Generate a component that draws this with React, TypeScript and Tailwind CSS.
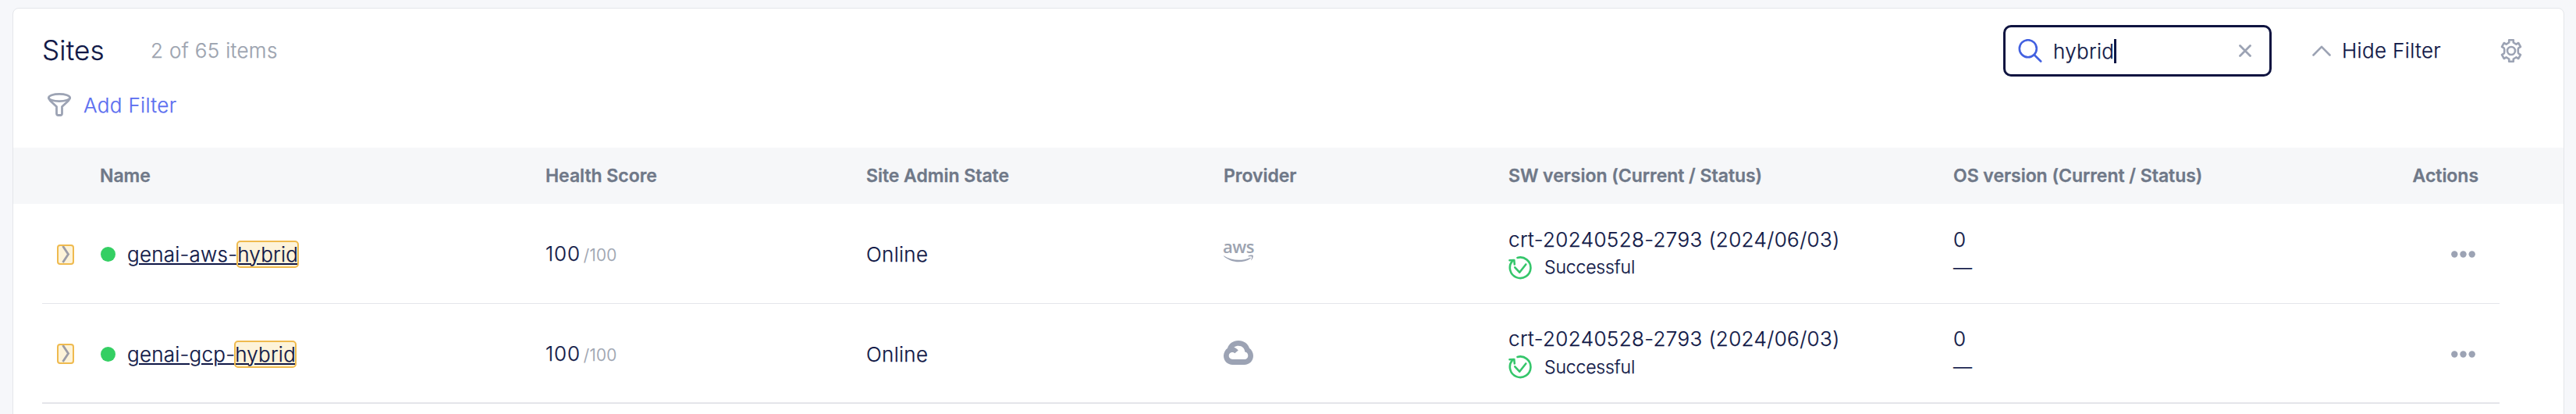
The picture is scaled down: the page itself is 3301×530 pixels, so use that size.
import React from "react";

const ROWS = [
  { prefix: "genai-aws-", provider: "aws", height: "h-[127px]", divider: "h-px" },
  { prefix: "genai-gcp-", provider: "gcp", height: "h-[126px]", divider: "h-[2px]" },
];

function SearchIcon() {
  return (
    <svg className="h-[30px] w-[31px] shrink-0" viewBox="0 0 31 30" fill="none" stroke="#4361e0" strokeWidth="2.6" strokeLinecap="round">
      <circle cx="12.800" cy="12.200" r="11" />
      <path d="M20.800 20.300l8.400 8.200" />
    </svg>
  );
}

function FunnelIcon() {
  return (
    <svg className="h-[30px] w-[30px] shrink-0" viewBox="0 0 30 30" fill="none" stroke="#9ca3b4" strokeWidth="2.8" strokeLinejoin="round" strokeLinecap="round">
      <ellipse cx="15" cy="6" rx="13.6" ry="4.6" />
      <path d="M1.4 6.300c0 1.600 1 2.600 2 3.600L11.500 17.500V26.200c0 1.500 1 2.300 2.200 2.300h2.600c1.200 0 2.200-.8 2.200-2.300V17.500L26.600 9.900c1-1 2-2 2-3.600" />
    </svg>
  );
}

function GearIcon() {
  return (
    <svg className="h-[30px] w-[30px] shrink-0" viewBox="0 0 30 30" fill="none" stroke="#9ca3b4" strokeWidth="2.6" strokeLinejoin="round">
      <circle cx="15" cy="15" r="5" />
      <path d="M12.200 1.300h5.600v3.200l3.600 2.100 2.800-1.600 2.800 4.900-2.500 1.500c-.7.4-.7 1.200-.7 2v3.200c0 .8 0 1.600.7 2l2.500 1.500-2.800 4.900-2.800-1.600-3.600 2.100v3.200h-5.600v-3.200l-3.600-2.100-2.800 1.600L3 20.100l2.500-1.500c.7-.4.7-1.200.7-2v-3.200c0-.8 0-1.600-.7-2L3 9.900 5.800 5l2.800 1.600 3.600-2.100z" />
    </svg>
  );
}

function SuccessIcon() {
  return (
    <svg className="h-[30px] w-[30px] shrink-0" viewBox="0 0 30 30" fill="none" stroke="#35c66b" strokeWidth="2.600" strokeLinecap="round" strokeLinejoin="round">
      <path d="M11.500 2A13.300 13.300 0 1 1 5 6.200" />
      <path d="M1.500 5.300L7.300 5l.5 5.400" />
      <path d="M8.300 14.300l5.900 6.400L22.300 10.500" />
    </svg>
  );
}

function AwsLogo() {
  return (
    <div className="flex w-[38px] flex-col items-center pb-[7px] [-webkit-text-stroke:0]">
      <span className="font-['Open_Sans'] text-[22px] font-semibold leading-[15px] tracking-[-0.4px] text-[#9ca3b0]">aws</span>
      <svg className="mt-[3px] h-[10px] w-[38px]" viewBox="0 0 38 10" fill="#9ca3b4">
        <path d="M.4 1.400C6 5 12.500 6.800 19.500 6.800c4.700 0 9.700-1 14.300-2.900.7-.3 1.300.5.600 1C30.400 7.800 24.600 9.300 19.500 9.300 12.500 9.300 5.300 6.700.1 2c-.4-.4 0-.8.3-.6z" />
        <path d="M31.400 1.700c2-1.400 5.300-1.300 6.200-.8.8.6-.2 4.500-2 6.200-.3.300-.6.100-.5-.2.400-1 1.400-3.700.9-4.300s-3-.3-4.200-.2c-.5 0-.7-.4-.4-.7z" />
      </svg>
    </div>
  );
}

function GcpLogo() {
  return (
    <div className="pb-[3px]">
      <svg className="h-[31px] w-[38px]" viewBox="0 0 38 31">
        <path fill="#9ca3b4" d="M19 0c7 0 12.500 4.300 14 9.700C36 11.800 38 15.500 38 19.500 38 26 33 31 26.500 31h-15C5 31 0 26 0 19.500c0-4 2-7.700 5-9.800C6.500 4.300 12 0 19 0z" />
        <path fill="#fff" d="M13.300 8.800C15 7.300 17 6.800 19 6.800c4.800 0 8 3.200 8.300 7.800 2.500.2 4 2.200 4 4.600 0 2.700-2 4.800-4.600 4.800H11.500c-2.700 0-4.800-2-4.800-4.700s2.100-4.400 4.300-4.400c1.300 0 2.400.5 3.300 1.400l4.500-3.900c-1.400-1.800-3.300-2.900-5.500-3.600z" />
      </svg>
    </div>
  );
}

export default function App() {
  return (
    <div className="flex h-[530px] w-[3301px] overflow-hidden bg-[#f6f7fa] pl-4 pr-[15px] pt-[10px] font-['Inter',sans-serif] text-[26px] font-light text-[#0f1746] [-webkit-text-stroke:0.25px_currentColor]">
      <div className="h-[560px] flex-1 rounded-lg border border-[#e4e6ea] bg-white">
        <header className="flex h-[108px] items-center pl-[37px] pr-[52px]">
          <h1 className="w-[139px] pb-px text-[35px] tracking-[0.2px]">Sites</h1>
          <span className="flex-1 pb-px tracking-[0.35px] text-[#9ca3af]">2 of 65 items</span>
          <div className="flex h-[66px] w-[344px] items-center rounded-[10px] border-[3px] border-[#0f1440] pl-[16px] pr-[23px]">
            <SearchIcon />
            <span className="ml-[14px] tracking-[0.3px]">hybrid</span>
            <span className="h-[31px] w-[3px] bg-[#0f1746]" />
            <svg className="ml-auto h-4 w-4" viewBox="0 0 16 16" stroke="#9ca3b4" strokeWidth="2.800" strokeLinecap="round">
              <path d="M1.500 1.500l13 13M14.500 1.500l-13 13" />
            </svg>
          </div>
          <svg className="ml-[52px] h-[14px] w-6" viewBox="0 0 24 14" fill="none" stroke="#9ca3b4" strokeWidth="2.600" strokeLinecap="round" strokeLinejoin="round">
            <path d="M1.500 12.500L12 1.800l10.500 10.700" />
          </svg>
          <span className="ml-[14px] w-[202px] pb-px tracking-[0.35px]">Hide Filter</span>
          <GearIcon />
        </header>
        <div className="flex h-[70px] items-start gap-4 pl-[44px]">
          <FunnelIcon />
          <span className="leading-[32px] tracking-[0.35px] text-[#5b6ef0]">Add Filter</span>
        </div>
        <div className="grid h-[72px] grid-cols-[571px_411px_458px_365px_570px_1fr_auto] items-center bg-[#f6f7f9] pl-[111px] pr-[109px] text-[23px] font-semibold tracking-[-0.03px] text-[#6f7888] [-webkit-text-stroke:0.3px_currentColor]">
          <span>Name</span>
          <span>Health Score</span>
          <span>Site Admin State</span>
          <span>Provider</span>
          <span>SW version (Current / Status)</span>
          <span>OS version (Current / Status)</span>
          <span>Actions</span>
        </div>
        {ROWS.map((row) => (
          <div key={row.provider} className="pl-[37px] pr-[82px]">
            <div className={`grid ${row.height} grid-cols-[74px_571px_411px_458px_365px_570px_1fr_auto] items-center pr-[31px] pt-[2px]`}>
              <span className="ml-[19px] flex h-[26px] w-[22px] items-center justify-center rounded-[4px] border-2 border-[#efba4e] bg-[#fdf3d9]">
                <svg className="h-[22px] w-[11px]" viewBox="0 0 11 22" fill="none" stroke="#9c9ca6" strokeWidth="2.800">
                  <path d="M1.500 0l7 10.500-7 10.500" />
                </svg>
              </span>
              <span className="flex items-center">
                <span className="ml-px mr-[15px] h-[19px] w-[19px] rounded-full bg-[#34cf63]" />
                <span className="tracking-[0.24px] underline decoration-2 underline-offset-2">
                  {row.prefix}
                  <mark className="rounded-[4px] bg-[#fdf3d9] py-px text-[#0f1746] outline-2 -outline-offset-1 outline-[#efba4e]">hybrid</mark>
                </span>
              </span>
              <span className="flex items-baseline pb-[2px]">
                <span className="tracking-[0.8px]">100</span>
                <span className="ml-[4px] text-[21px] tracking-[0.3px] text-[#9ca3af]">/100</span>
              </span>
              <span className="tracking-[0.3px]">Online</span>
              {row.provider === "aws" ? <AwsLogo /> : <GcpLogo />}
              <div className="pb-[2px]">
                <div className="leading-9 tracking-[0.38px]">crt-20240528-2793 (2024/06/03)</div>
                <div className="flex h-9 items-center gap-[16px] text-[23px] tracking-[-0.15px]">
                  <SuccessIcon />
                  Successful
                </div>
              </div>
              <div className="pb-[2px]">
                <div className="leading-9">0</div>
                <div className="h-9 text-[24px] leading-9">—</div>
              </div>
              <svg className="h-[9px] w-[31px]" viewBox="0 0 31 9" fill="#9ca3b4">
                <circle cx="4.300" cy="4.500" r="4.200" />
                <circle cx="15.500" cy="4.500" r="4.200" />
                <circle cx="26.700" cy="4.500" r="4.200" />
              </svg>
            </div>
            <div className={`${row.divider} bg-[#e4e5ea]`} />
          </div>
        ))}
      </div>
    </div>
  );
}
